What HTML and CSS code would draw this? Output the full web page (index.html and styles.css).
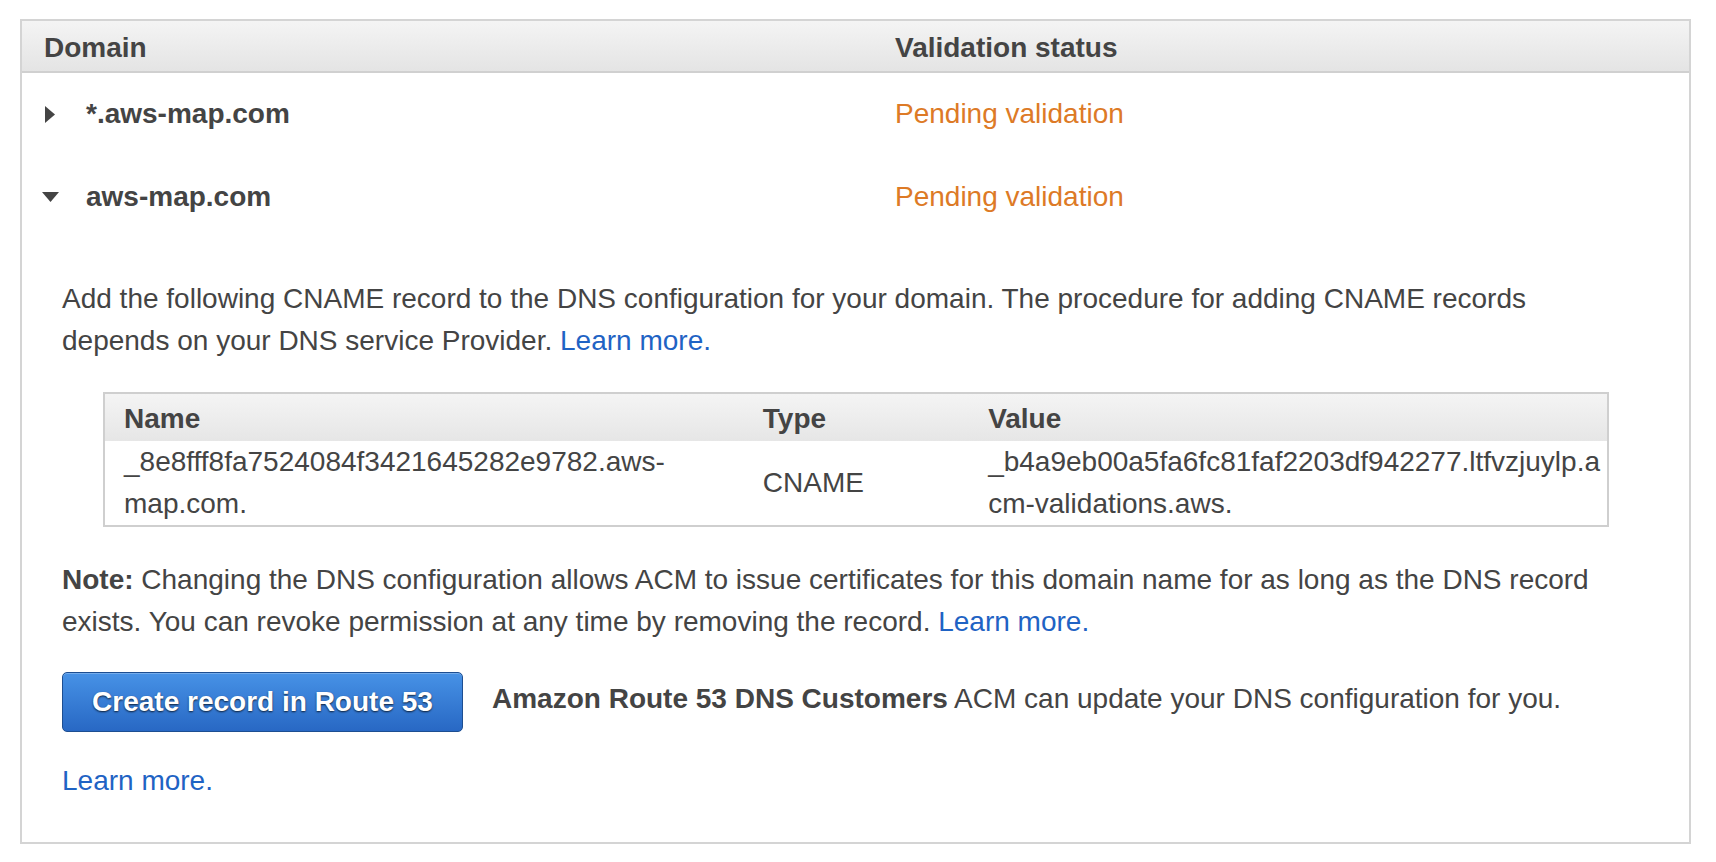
FILE: index.html
```html
<!DOCTYPE html>
<html lang="en">
<head>
<meta charset="utf-8">
<title>Domain validation</title>
<link rel="stylesheet" href="styles.css">
</head>
<body>
<div class="panel">
  <div class="panel-head">
    <div class="col-domain">Domain</div>
    <div class="col-status">Validation status</div>
  </div>
  <div class="domain-row">
    <div class="col-domain">
      <span class="caret caret-right">
        <svg width="10" height="17" viewBox="0 0 10 17"><path d="M0 0 L10 8.5 L0 17 Z" fill="#444"/></svg>
      </span>
      <span class="domain-name">*.aws-map.com</span>
    </div>
    <div class="col-status pending">Pending validation</div>
  </div>
  <div class="domain-row">
    <div class="col-domain">
      <span class="caret caret-down">
        <svg width="17" height="10" viewBox="0 0 17 10"><path d="M0 0 L17 0 L8.5 10 Z" fill="#444"/></svg>
      </span>
      <span class="domain-name">aws-map.com</span>
    </div>
    <div class="col-status pending">Pending validation</div>
  </div>
  <div class="detail">
    <p class="text">Add the following CNAME record to the DNS configuration for your domain. The procedure for adding CNAME records depends on your DNS service Provider. <a class="link" href="#">Learn more.</a></p>
    <table class="records">
      <colgroup>
        <col class="c-name">
        <col class="c-type">
        <col class="c-value">
      </colgroup>
      <thead>
        <tr><th class="name-cell">Name</th><th>Type</th><th>Value</th></tr>
      </thead>
      <tbody>
        <tr>
          <td class="name-cell">_8e8fff8fa7524084f3421645282e9782.aws-map.com.</td>
          <td>CNAME</td>
          <td class="value-cell">_b4a9eb00a5fa6fc81faf2203df942277.ltfvzjuylp.acm-validations.aws.</td>
        </tr>
      </tbody>
    </table>
    <p class="text note"><b>Note:</b> Changing the DNS configuration allows ACM to issue certificates for this domain name for as long as the DNS record exists. You can revoke permission at any time by removing the record. <a class="link" href="#">Learn more.</a></p>
    <div class="route-row">
      <button class="btn-primary" type="button">Create record in Route 53</button>
      <span class="route-text"><b>Amazon Route 53 DNS Customers</b> ACM can update your DNS configuration for you.</span>
    </div>
    <p class="text learn"><a class="link" href="#">Learn more.</a></p>
  </div>
</div>
</body>
</html>
```

FILE: styles.css
```css
* { box-sizing: border-box; }

html, body {
  margin: 0;
  padding: 0;
  background: #ffffff;
}

body {
  font-family: "Liberation Sans", Arial, Helvetica, sans-serif;
  font-size: 28px;
  line-height: 42px;
  color: #444444;
}

.panel {
  margin: 19px 25px 0 20px;
  border: 2px solid #d4d4d4;
  padding-bottom: 40px;
}

.panel-head {
  display: grid;
  grid-template-columns: 851px 1fr;
  height: 52px;
  padding-top: 3px;
  align-items: center;
  background: linear-gradient(#f4f4f4, #e4e4e4);
  border-bottom: 2px solid #d0d0d0;
  font-weight: bold;
  color: #444444;
}

.col-domain {
  padding-left: 22px;
  display: flex;
  align-items: center;
}

.col-status {
  padding-left: 22px;
}

.domain-row {
  display: grid;
  grid-template-columns: 851px 1fr;
  padding: 20px 0 21px;
}

.caret {
  width: 42px;
  display: flex;
  align-items: center;
}

.caret-right { padding-left: 1px; }
.caret-down { margin-left: -2px; width: 44px; }

.caret svg { display: block; }

.domain-name {
  font-weight: bold;
  color: #444444;
}

.pending {
  color: #dd7a26;
}

.detail {
  padding: 39px 59px 0 40px;
}

.text {
  margin: 0;
}

.link {
  color: #1f63c4;
  text-decoration: none;
}

.records {
  margin: 30px 21px 0 41px;
  width: 1506px;
  border: 2px solid #cfcfcf;
  border-collapse: collapse;
  table-layout: fixed;
}

.c-name { width: 638px; }
.c-type { width: 225px; }
.c-value { width: 639px; }

.records th {
  text-align: left;
  font-weight: bold;
  height: 48px;
  padding: 3px 0 0 20px;
  background: linear-gradient(#f4f4f4, #e6e6e6);
  color: #444444;
}

.records td {
  padding: 0 0 0 20px;
  vertical-align: middle;
  line-height: 42px;
}

.records .name-cell { padding-left: 19px; }

.value-cell {
  word-break: break-all;
}

.note {
  margin-top: 32px;
}

.note b { font-weight: bold; }

.route-row {
  display: flex;
  align-items: center;
  margin-top: 29px;
}

.btn-primary {
  height: 60px;
  width: 401px;
  padding: 0;
  border: 1px solid #1d4e91;
  border-radius: 5px;
  background: linear-gradient(#4792e6, #2868c4);
  box-shadow: inset 0 1px 0 rgba(255, 255, 255, 0.25);
  color: #ffffff;
  font-family: "Liberation Sans", Arial, Helvetica, sans-serif;
  font-size: 28px;
  font-weight: bold;
  text-shadow: 0 1px 2px rgba(0, 0, 0, 0.75);
  flex: none;
}

.route-text {
  margin-left: 29px;
  margin-top: -6px;
}

.learn {
  margin-top: 28px;
}
```
